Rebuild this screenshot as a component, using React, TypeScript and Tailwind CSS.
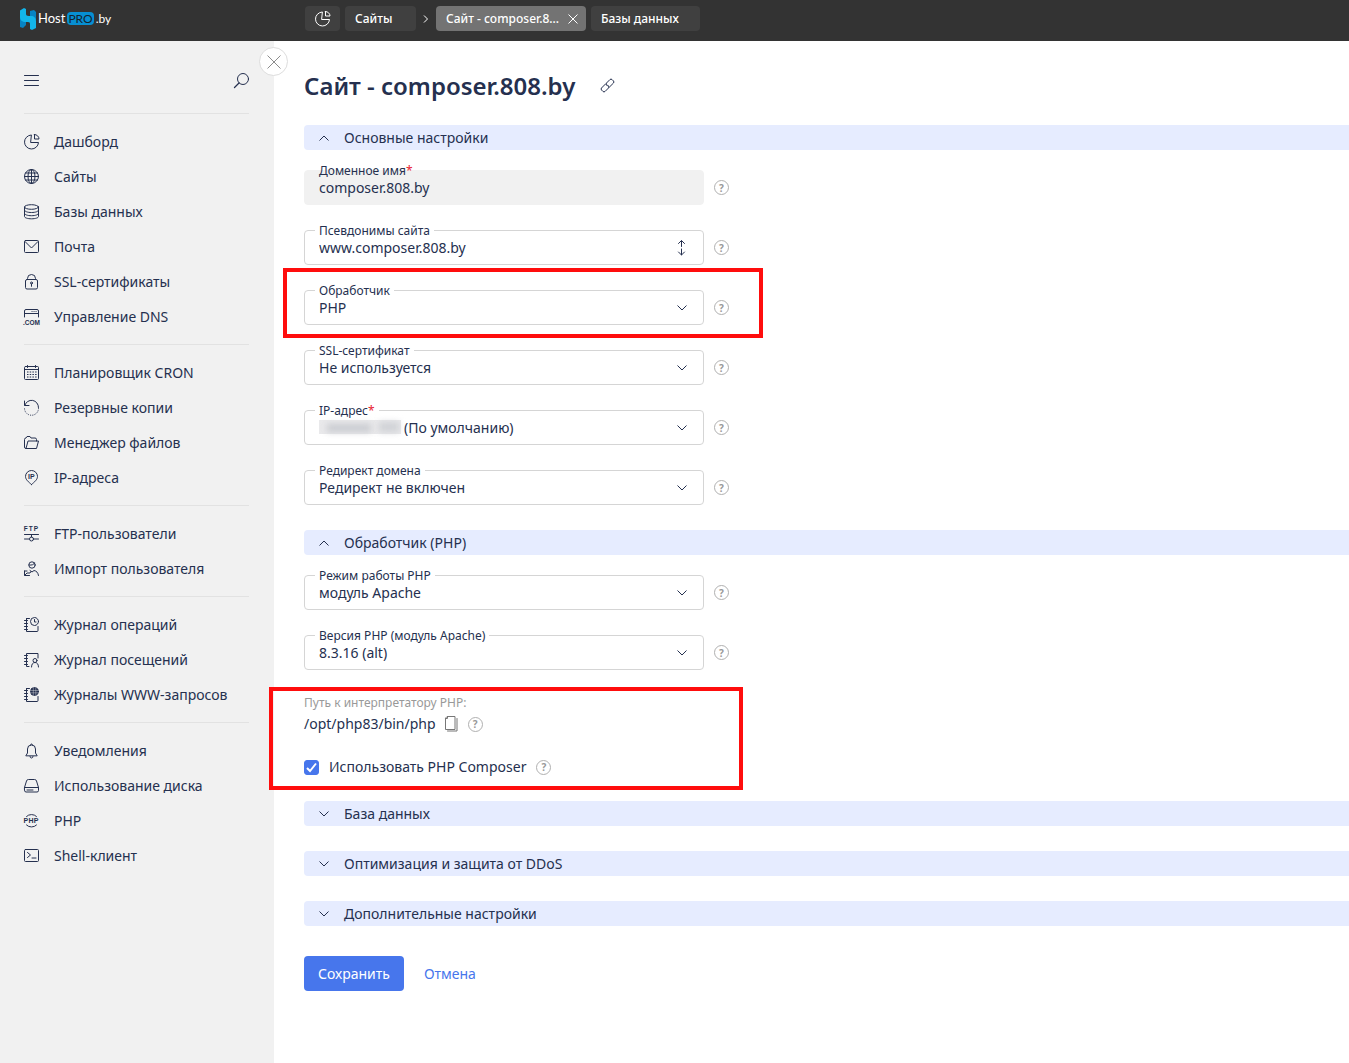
import { useState } from "react";
import type { ReactNode } from "react";

interface IconProps {
  children: ReactNode;
  className?: string;
}

function Icon({ children, className = "" }: IconProps) {
  return (
    <svg
      viewBox="0 0 16 16"
      fill="none"
      stroke="currentColor"
      strokeWidth="1"
      strokeLinecap="round"
      strokeLinejoin="round"
      aria-hidden="true"
      className={`size-4 shrink-0 overflow-visible ${className}`}
    >
      {children}
    </svg>
  );
}

const iconText = {
  fill: "currentColor",
  stroke: "none",
  fontFamily: "Liberation Sans, sans-serif",
  fontWeight: 700,
};

const pie = (
  <>
    <path d="M7 1a7 7 0 1 0 7.500 7.500H7z" />
    <path d="M10.500.5v4.500h4.500A4.500 4.500 0 0 0 10.500.5z" />
  </>
);

const notebook = (
  <path d="M.5 3.500h3M.5 6.500h3M.5 9.500h3M.5 12.500h3M2.500 1.500v13H13a1 1 0 0 0 1-1v-4M2.500 1.500h3" />
);

const icons: Record<string, ReactNode> = {
  pie,
  globe: (
    <>
      <circle cx="7.500" cy="7.500" r="7" />
      <ellipse cx="7.500" cy="7.500" rx="3.500" ry="7" />
      <path d="M.5 7.500h14M7.500 .5v14M1.500 4h12M1.500 11h12" />
    </>
  ),
  database: (
    <>
      <ellipse cx="7.500" cy="3" rx="7" ry="2.300" />
      <path d="M.5 3v9.500c0 1.300 3 2.300 7 2.300s7-1 7-2.300V3M.5 6.200c0 1.300 3 2.300 7 2.300s7-1 7-2.300M.5 9.400c0 1.300 3 2.300 7 2.300s7-1 7-2.300" />
    </>
  ),
  mail: (
    <>
      <rect x=".5" y="1.500" width="14" height="12" rx="1" />
      <path d="M1 2.500 7.500 9 14 2.500" />
    </>
  ),
  lock: (
    <>
      <rect x="1.500" y="5.500" width="12" height="9.500" rx="1.500" />
      <path d="M3.500 5.500v-1a4 4 0 0 1 8 0v1M7.500 10v2.300" />
      <circle cx="7.500" cy="9" r="1" />
    </>
  ),
  dns: (
    <>
      <path d="M.5 8V2a1.500 1.500 0 0 1 1.500-1.500h11A1.500 1.500 0 0 1 14.500 2v6M.5 4.500h14" />
      <path d="M8 2.500h.1M10 2.500h.1M12 2.500h.1" />
      <text x="-1" y="15.500" fontSize="6.500" {...iconText}>
        .COM
      </text>
    </>
  ),
  calendar: (
    <>
      <rect x=".5" y="1.500" width="14" height="13" rx="1" />
      <path d="M.5 4.500h14M3.500 .5v2M11.500 .5v2" />
      <path
        d="M3 7h10M3 9.500h10M3 12h10"
        strokeDasharray="1.500 1.200"
        strokeLinecap="butt"
      />
    </>
  ),
  restore: (
    <>
      <path d="M.5 1v4.500H5M.8 5.300A7 7 0 0 1 14.500 7.500" />
      <path d="M14.500 8.500A7 7 0 0 1 .5 8" strokeDasharray=".3 2" />
    </>
  ),
  folder: (
    <path d="M2 13.500h10.500l2-7.500H4L2 13.500A1.500 1.500 0 0 1 .5 12V4.500A1.500 1.500 0 0 1 2 3l1-1.500h3L7 3h4a1.500 1.500 0 0 1 1.500 1.500V6" />
  ),
  ip: (
    <>
      <path d="M7.500 14.500C4.500 12 1.500 9.500 1.500 6.500a6 6 0 0 1 12 0c0 3-3 5.500-6 8z" />
      <text x="4" y="9" fontSize="7" {...iconText}>
        IP
      </text>
    </>
  ),
  ftp: (
    <>
      <text x="-.3" y="5.300" fontSize="6.500" letterSpacing="1" {...iconText}>
        FTP
      </text>
      <path d="M.5 8.500h14M7.500 8.500v2.500M.5 13h4.500M10 13h4.500" />
      <circle cx="7.500" cy="13" r="2" />
    </>
  ),
  userImport: (
    <>
      <circle cx="8" cy="4" r="3.200" />
      <path d="M5 4c3 .5 5-.5 5.500-2M6 9.500 8 11l2-1.500c2.500.5 4 2 4.500 5M.5 10v4.500h5M.5 10h2.500M.8 14.200 3 12h3l1-1.500" />
    </>
  ),
  logClock: (
    <>
      {notebook}
      <circle cx="10.500" cy="4.500" r="4" />
      <path d="M10.500 2.500v2.500h1.500" />
    </>
  ),
  logUser: (
    <>
      <path d="M.5 3.500h3M.5 6.500h3M.5 9.500h3M.5 12.500h3M5 14.500H2.500V1.500H14V6" />
      <circle cx="11" cy="8.500" r="2" />
      <path d="M7.500 15c0-3 1.500-4.500 3.500-4.500s3.500 1.500 3.500 4.500" />
    </>
  ),
  logGlobe: (
    <>
      {notebook}
      <circle cx="10.500" cy="4.500" r="4" fill="currentColor" />
      <path
        d="M6.500 3.500h8M6.500 5.800h8M9.300.5v8M11.800.5v8"
        stroke="#f1f1f1"
        strokeWidth=".4"
      />
    </>
  ),
  bell: (
    <>
      <path d="M2 12.500 3.500 10V6a4 4 0 0 1 8 0v4l1.500 2.500z" />
      <path d="M6 13.500a1.500 1.500 0 0 0 3 0M6.500 2a1 1 0 0 1 2 0" />
    </>
  ),
  disk: (
    <path d="M.5 9.500 2.500 3A2 2 0 0 1 4.500 1.500h6a2 2 0 0 1 2 1.500l2 6.500v3A1.500 1.500 0 0 1 13 14H2A1.500 1.500 0 0 1 .5 12.500zM.5 9.500h14M3 12h6" />
  ),
  php: (
    <>
      <path d="M2.500 3.500A7 7 0 0 1 12.500 3.500M2.500 12A7 7 0 0 0 12.500 12" />
      <text x="-.5" y="10" fontSize="7" letterSpacing=".3" {...iconText}>
        PHP
      </text>
    </>
  ),
  shell: (
    <>
      <rect x=".5" y="1.500" width="14" height="12" rx="1" />
      <path d="M3.500 4.500 6.500 7l-3 2.500M8 10h4" />
    </>
  ),
};

const menu = [
  [
    { icon: "pie", title: "Дашборд" },
    { icon: "globe", title: "Сайты" },
    { icon: "database", title: "Базы данных" },
    { icon: "mail", title: "Почта" },
    { icon: "lock", title: "SSL-сертификаты" },
    { icon: "dns", title: "Управление DNS" },
  ],
  [
    { icon: "calendar", title: "Планировщик CRON" },
    { icon: "restore", title: "Резервные копии" },
    { icon: "folder", title: "Менеджер файлов" },
    { icon: "ip", title: "IP-адреса" },
  ],
  [
    { icon: "ftp", title: "FTP-пользователи" },
    { icon: "userImport", title: "Импорт пользователя" },
  ],
  [
    { icon: "logClock", title: "Журнал операций" },
    { icon: "logUser", title: "Журнал посещений" },
    { icon: "logGlobe", title: "Журналы WWW-запросов" },
  ],
  [
    { icon: "bell", title: "Уведомления" },
    { icon: "disk", title: "Использование диска" },
    { icon: "php", title: "PHP" },
    { icon: "shell", title: "Shell-клиент" },
  ],
];

function Help() {
  return (
    <button
      type="button"
      aria-label="Подсказка"
      className="flex size-[15px] shrink-0 items-center justify-center rounded-full border border-[#b0b0b0] text-[10px] leading-none font-bold text-[#999]"
    >
      ?
    </button>
  );
}

function Chevron({ up = false }: { up?: boolean }) {
  return (
    <svg
      viewBox="0 0 10 6"
      fill="none"
      stroke="currentColor"
      aria-hidden="true"
      className="h-1.5 w-2.5 shrink-0"
    >
      <path d={up ? "M.5 5.500 5 1l4.500 4.500" : "M.5 .5 5 5l4.500-4.500"} />
    </svg>
  );
}

interface FieldProps {
  id: string;
  label: string;
  value: string;
  required?: boolean;
  kind?: "select" | "text" | "disabled";
  masked?: boolean;
}

function Field({
  id,
  label,
  value,
  required,
  kind = "select",
  masked,
}: FieldProps) {
  const box = "h-[35px] w-full rounded pr-10 text-sm outline-none";
  return (
    <div className="flex items-center gap-2.5">
      <div className="relative w-full max-w-[400px]">
        {kind === "select" && (
          <select
            id={id}
            className={`${box} appearance-none border border-[#d5d5d5] bg-white ${masked ? "pl-[99px]" : "pl-3.5"}`}
          >
            <option>{value}</option>
          </select>
        )}
        {kind === "text" && (
          <input
            id={id}
            type="text"
            defaultValue={value}
            className={`${box} border border-[#d5d5d5] bg-white pl-3.5`}
          />
        )}
        {kind === "disabled" && (
          <input
            id={id}
            type="text"
            readOnly
            value={value}
            className={`${box} border border-[#f1f1f1] bg-[#f1f1f1] pl-3.5`}
          />
        )}
        <label
          htmlFor={id}
          className={`absolute -top-1.5 left-[11px] px-1 text-xs leading-[14px] ${kind === "disabled" ? "" : "bg-white"}`}
        >
          {label}
          {required && <span className="text-[#e8212f]">*</span>}
        </label>
        {masked && (
          <span className="absolute top-2.5 left-[15px] flex h-3.5 w-[82px] bg-[#e9e9eb]">
            <span className="mt-1 ml-2 h-2 w-11 bg-[#c9cbd0] blur-[3px]" />
            <span className="mt-0.5 ml-2 h-2.5 w-5 bg-[#d0d2d6] blur-[3px]" />
          </span>
        )}
        {kind === "select" && (
          <span className="pointer-events-none absolute inset-y-0 right-[17px] flex items-center">
            <Chevron />
          </span>
        )}
        {kind === "text" && (
          <span className="pointer-events-none absolute inset-y-0 right-3.5 flex items-center">
            <Icon>
              <path d="M7.500 1v5.500M4.500 3.500l3-3 3 3M7.500 9v6M4.500 12l3 3 3-3" />
            </Icon>
          </span>
        )}
      </div>
      <Help />
    </div>
  );
}

function Section({ title, open = false }: { title: string; open?: boolean }) {
  return (
    <h2>
      <button
        type="button"
        aria-expanded={open}
        className="flex h-[25px] w-full items-center gap-[15px] rounded-l bg-[#e6ecff] pl-[15px] text-left text-sm"
      >
        <Chevron up={open} />
        {title}
      </button>
    </h2>
  );
}

function Header() {
  const tab = "flex h-[25px] items-center rounded bg-[#404040]";
  return (
    <header className="flex h-[41px] items-center bg-[#333] pb-1 text-xs font-medium text-white">
      <a
        href="#"
        className="mr-[31px] flex w-[274px] shrink-0 items-center pl-[19px] font-['Lato',sans-serif] text-xs font-normal"
      >
        <svg viewBox="0 0 18 24" className="h-6 w-[18px]" aria-hidden="true">
          <path d="M1 8h6v10l-3 3-3-1z" fill="#0784c4" />
          <path d="M11 4l4-1 2 2v8h-6z" fill="#0784c4" />
          <path
            d="M1 3.500 5 1l2 1v5c0 2 2 2 5 2 3 0 5 2 5 5v7l-4 2-2-1v-5c0-2-1-2-4-2-4 0-6-2-6-5z"
            fill="#12b5ea"
          />
        </svg>
        <span className="ml-px text-[13px]">Host</span>
        <span className="mx-[2px] rounded bg-[#078fd2] px-px leading-[13px] text-[#12222e]">
          PRO
        </span>
        <span>.by</span>
      </a>
      <nav className="flex items-center gap-[5px]">
        <a href="#" aria-label="Дашборд" className={`${tab} w-[35px] justify-center`}>
          <Icon>{pie}</Icon>
        </a>
        <a href="#" className={`${tab} w-[71px] pl-2.5`}>
          Сайты
        </a>
        <svg
          viewBox="0 0 10 10"
          className="size-2.5"
          fill="none"
          stroke="currentColor"
          aria-hidden="true"
        >
          <path d="M3 1.500 6.500 5 3 8.500" />
        </svg>
        <div className="flex h-[25px] w-[150px] items-center justify-between rounded bg-[#737373] pr-2 pl-2.5">
          <a href="#" className="whitespace-nowrap">
            Сайт - composer.8...
          </a>
          <button type="button" aria-label="Закрыть вкладку">
            <svg
              viewBox="0 0 10 10"
              className="size-2.5"
              stroke="currentColor"
              aria-hidden="true"
            >
              <path d="m.5.5 9 9M9.500.5l-9 9" />
            </svg>
          </button>
        </div>
        <a href="#" className={`${tab} w-[109px] pl-2.5`}>
          Базы данных
        </a>
      </nav>
    </header>
  );
}

function Sidebar() {
  return (
    <aside className="relative w-[274px] shrink-0 bg-[#f1f1f1] pr-[25px] pl-6">
      <button
        type="button"
        aria-label="Свернуть меню"
        className="absolute top-1.5 -right-3.5 flex size-[29px] items-center justify-center rounded-full border border-[#ddd] bg-white text-[#8c8c8c]"
      >
        <svg
          viewBox="0 0 14 14"
          className="size-3.5"
          stroke="currentColor"
          aria-hidden="true"
        >
          <path d="m.5.5 13 13M13.500.5l-13 13" />
        </svg>
      </button>
      <div className="flex h-[72px] items-center justify-between pt-2">
        <button type="button" aria-label="Меню">
          <Icon>
            <path d="M.5 2.500h14M.5 7.500h14M.5 12.500h14" />
          </Icon>
        </button>
        <button type="button" aria-label="Поиск">
          <Icon>
            <circle cx="10" cy="6" r="5.500" />
            <path d="M6 10 1.500 14.500" strokeWidth="1.300" />
          </Icon>
        </button>
      </div>
      <nav>
        {menu.map((group) => (
          <ul
            key={group[0].title}
            className="border-t border-[#e2e2e2] py-2.5"
          >
            {group.map((item) => (
              <li key={item.title}>
                <a href="#" className="flex h-[35px] items-center gap-3.5 text-sm">
                  <Icon>{icons[item.icon]}</Icon>
                  {item.title}
                </a>
              </li>
            ))}
          </ul>
        ))}
      </nav>
    </aside>
  );
}

export default function App() {
  const [composer, setComposer] = useState<boolean>(true);

  return (
    <div className="flex min-h-screen flex-col bg-white font-['Noto_Sans',sans-serif] text-[#25304f]">
      <Header />
      <div className="flex grow">
        <Sidebar />
        <main className="min-w-0 grow pl-[30px]">
          <div className="flex h-[84px] items-center gap-[25px] pt-1.5">
            <h1 className="text-2xl font-semibold">Сайт - composer.808.by</h1>
            <button type="button" aria-label="Скопировать ссылку">
              <Icon>
                <path d="M5.500 6 1.500 10a1.500 1.500 0 0 0 0 2l1.500 1.500a1.500 1.500 0 0 0 2 0l3.500-3.500a1.500 1.500 0 0 0 0-2L7.500 7" />
                <path d="M9.500 9 13.500 5a1.500 1.500 0 0 0 0-2L12 1.500a1.500 1.500 0 0 0-2 0L6.500 5a1.500 1.500 0 0 0 0 2l1 1" />
              </Icon>
            </button>
          </div>

          <form onSubmit={(e) => e.preventDefault()}>
            <Section title="Основные настройки" open />
            <div className="flex flex-col gap-[25px] pt-5 pb-[25px]">
              <Field
                id="domain"
                label="Доменное имя"
                value="composer.808.by"
                kind="disabled"
                required
              />
              <Field
                id="aliases"
                label="Псевдонимы сайта"
                value="www.composer.808.by"
                kind="text"
              />
              <div className="relative">
                <Field id="handler" label="Обработчик" value="PHP" />
                <div className="pointer-events-none absolute -top-[22px] -left-[21px] h-[70px] w-[480px] border-4 border-[#ff0d0d]" />
              </div>
              <Field id="ssl" label="SSL-сертификат" value="Не используется" />
              <Field
                id="ip"
                label="IP-адрес"
                value="(По умолчанию)"
                required
                masked
              />
              <Field
                id="redirect"
                label="Редирект домена"
                value="Редирект не включен"
              />
            </div>

            <Section title="Обработчик (PHP)" open />
            <div className="flex flex-col gap-[25px] pt-5 pb-[25px]">
              <Field id="mode" label="Режим работы PHP" value="модуль Apache" />
              <Field
                id="version"
                label="Версия PHP (модуль Apache)"
                value="8.3.16 (alt)"
              />
              <div className="relative">
                <p className="text-xs leading-4 text-[#999]">
                  Путь к интерпретатору PHP:
                </p>
                <div className="flex h-[26px] items-center gap-2 text-sm">
                  <span>/opt/php83/bin/php</span>
                  <button
                    type="button"
                    aria-label="Скопировать"
                    className="text-[#777]"
                  >
                    <Icon>
                      <path d="M3.500.5h7.500v13H1.500v-11zM3.500.5v2h-2M13 2.500v12.500H3.500" />
                    </Icon>
                  </button>
                  <Help />
                </div>
                <div className="mt-[19px] flex h-5 items-center gap-2.5 pt-0.5 text-sm">
                  <span className="relative flex size-[15px]">
                    <input
                      id="composer"
                      type="checkbox"
                      checked={composer}
                      onChange={(e) => setComposer(e.target.checked)}
                      className="peer size-[15px] appearance-none rounded-[3px] border border-[#4776ec] checked:bg-[#4776ec]"
                    />
                    <svg
                      viewBox="0 0 15 15"
                      fill="none"
                      stroke="white"
                      strokeWidth="2"
                      aria-hidden="true"
                      className="pointer-events-none absolute inset-0 hidden peer-checked:block"
                    >
                      <path d="m3 8 3 3 6-7.500" />
                    </svg>
                  </span>
                  <label htmlFor="composer">Использовать PHP Composer</label>
                  <Help />
                </div>
                <div className="pointer-events-none absolute -top-2 -left-[35px] h-[103px] w-[474px] border-4 border-[#ff0d0d]" />
              </div>
            </div>

            <div className="flex flex-col gap-[25px]">
              <Section title="База данных" />
              <Section title="Оптимизация и защита от DDoS" />
              <Section title="Дополнительные настройки" />
            </div>

            <div className="flex items-center gap-5 pt-[30px] text-sm">
              <button
                type="submit"
                className="h-[35px] rounded bg-[#4776ec] px-3.5 text-white"
              >
                Сохранить
              </button>
              <button type="button" className="text-[#4776ec]">
                Отмена
              </button>
            </div>
          </form>
        </main>
      </div>
    </div>
  );
}
